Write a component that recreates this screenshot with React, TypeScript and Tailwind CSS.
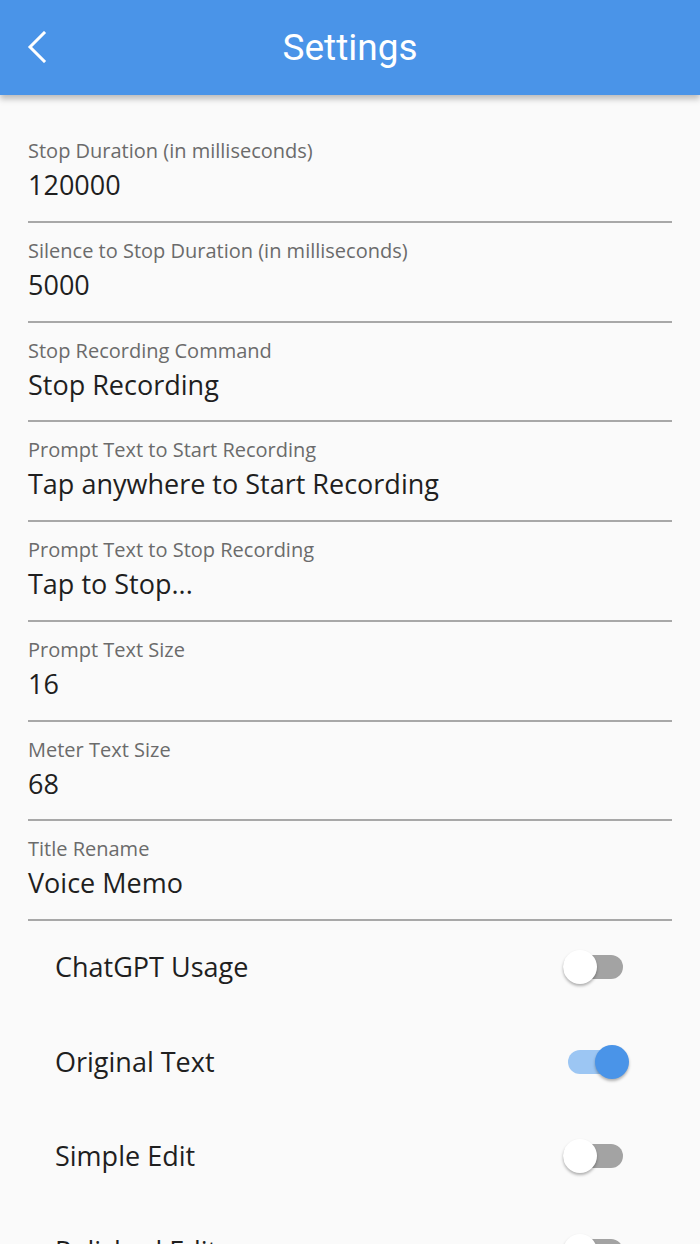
const fields = [
  { label: 'Stop Duration (in milliseconds)', value: '120000' },
  { label: 'Silence to Stop Duration (in milliseconds)', value: '5000' },
  { label: 'Stop Recording Command', value: 'Stop Recording' },
  { label: 'Prompt Text to Start Recording', value: 'Tap anywhere to Start Recording' },
  { label: 'Prompt Text to Stop Recording', value: 'Tap to Stop...' },
  { label: 'Prompt Text Size', value: '16' },
  { label: 'Meter Text Size', value: '68' },
  { label: 'Title Rename', value: 'Voice Memo' },
];

const toggles = [
  { label: 'ChatGPT Usage', on: false },
  { label: 'Original Text', on: true },
  { label: 'Simple Edit', on: false },
  { label: 'Polished Edit', on: false },
];

function Toggle({ on }: { on: boolean }) {
  return (
    <div className="relative w-[68px] h-[36px] shrink-0">
      {/* Track */}
      <div
        className={`absolute top-[6px] h-[24px] w-[60px] rounded-full ${
          on ? 'left-[5px] bg-[#9cc6f3]' : 'left-0 bg-[#a3a3a3]'
        }`}
      />
      {/* Thumb */}
      <div
        className={`absolute top-px w-[34px] h-[34px] rounded-full shadow-[0_2px_3px_rgba(0,0,0,0.3)] ${
          on ? 'left-[32px] bg-[#4a94e8]' : 'left-0 bg-white'
        }`}
      />
    </div>
  );
}

export default function App() {
  return (
    <div
      className="w-[700px] h-[1244px] overflow-hidden bg-[#fafafa] flex flex-col"
      style={{ fontFamily: '"Open Sans", Inter, sans-serif' }}
    >
      {/* App bar */}
      <div className="relative z-10 h-[95px] shrink-0 bg-[#4a94e8] flex items-center justify-center shadow-[0_4px_6px_rgba(0,0,0,0.25)]">
        <svg
          className="absolute left-[26px] top-[31px]"
          width="22"
          height="32"
          viewBox="0 0 22 32"
          fill="none"
          stroke="white"
          strokeWidth="3"
          strokeLinecap="square"
        >
          <path d="M18 2 L4 16 L18 30" />
        </svg>
        <div
          className="text-white text-[37px] leading-none"
          style={{ fontFamily: 'Roboto, sans-serif' }}
        >
          Settings
        </div>
      </div>

      {/* Fields */}
      <div className="flex flex-col px-[28px] pt-[28px]">
        {fields.map((f) => (
          <div key={f.label} className="h-[99.75px] shrink-0 flex flex-col pt-[15px] border-b-2 border-[#a8a8a8]">
            <div className="text-[20px] leading-[26px] text-[#6b6b6b]">{f.label}</div>
            <div className="text-[27px] leading-[32px] text-[#1f1f1f] mt-[5px]">{f.value}</div>
          </div>
        ))}
      </div>

      {/* Switches */}
      <div className="flex flex-col pl-[55px] pr-[69px] pt-[28px]">
        {toggles.map((t) => (
          <div key={t.label} className="h-[94.5px] flex items-start justify-between shrink-0">
            <div className="text-[27px] leading-[36px] text-[#1f1f1f]">{t.label}</div>
            <Toggle on={t.on} />
          </div>
        ))}
      </div>
    </div>
  );
}
